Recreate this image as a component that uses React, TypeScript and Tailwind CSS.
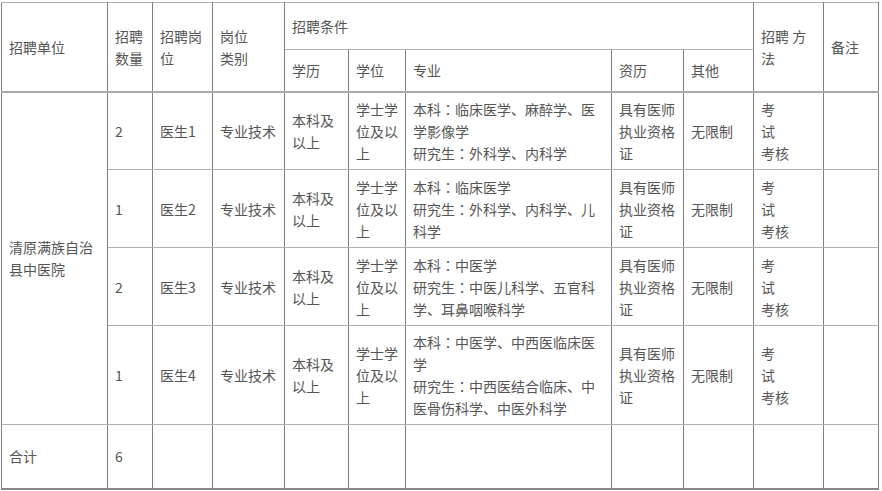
import React from "react";

const cell =
  "border border-y-[#b0b0b0] border-x-[#808080] px-[7px] py-[5px] align-middle text-left";

function Colonize({ text }: { text: string }) {
  const parts = text.split("：");
  if (parts.length === 1) return <>{text}</>;
  return (
    <>
      {parts[0]}
      <span style={{ fontFamily: '"Noto Sans CJK TC", sans-serif' }}>：</span>
      {parts.slice(1).join("：")}
    </>
  );
}

function Lines({ lines }: { lines: string[] }) {
  return (
    <>
      {lines.map((l, i) => (
        <div key={i} className="whitespace-nowrap">
          <Colonize text={l} />
        </div>
      ))}
    </>
  );
}

const rows = [
  {
    n: "2",
    pos: "医生1",
    major: ["本科：临床医学、麻醉学、医", "学影像学", "研究生：外科学、内科学"],
    h: "h-[78px]",
  },
  {
    n: "1",
    pos: "医生2",
    major: ["本科：临床医学", "研究生：外科学、内科学、儿", "科学"],
    h: "h-[78px]",
  },
  {
    n: "2",
    pos: "医生3",
    major: ["本科：中医学", "研究生：中医儿科学、五官科", "学、耳鼻咽喉科学"],
    h: "h-[78px]",
  },
  {
    n: "1",
    pos: "医生4",
    major: [
      "本科：中医学、中西医临床医",
      "学",
      "研究生：中西医结合临床、中",
      "医骨伤科学、中医外科学",
    ],
    h: "h-[99px]",
  },
];

export default function App() {
  return (
    <div
      className="w-[882px] h-[491px] bg-white text-[14px] leading-[22px] text-[#555]"
      style={{ fontFamily: '"Noto Sans CJK SC", "Microsoft YaHei", sans-serif' }}
    >
      <table className="ml-px mt-[2px] border-collapse table-fixed w-[877px] border-b-2 border-b-[#888]">
        <colgroup>
          <col className="w-[106px]" />
          <col className="w-[45px]" />
          <col className="w-[60px]" />
          <col className="w-[72px]" />
          <col className="w-[64px]" />
          <col className="w-[57px]" />
          <col className="w-[206px]" />
          <col className="w-[72px]" />
          <col className="w-[70px]" />
          <col className="w-[70px]" />
          <col className="w-[55px]" />
        </colgroup>
        <tbody>
          <tr className="h-[47px]">
            <td rowSpan={2} className={cell}>
              招聘单位
            </td>
            <td rowSpan={2} className={cell}>
              <Lines lines={["招聘", "数量"]} />
            </td>
            <td rowSpan={2} className={cell}>
              <Lines lines={["招聘岗", "位"]} />
            </td>
            <td rowSpan={2} className={cell}>
              <Lines lines={["岗位", "类别"]} />
            </td>
            <td colSpan={5} className={cell}>
              招聘条件
            </td>
            <td rowSpan={2} className={cell}>
              <Lines lines={["招聘 方", "法"]} />
            </td>
            <td rowSpan={2} className={cell}>
              备注
            </td>
          </tr>
          <tr className="h-[42px] border-b-2 border-b-[#aaa]">
            <td className={cell}>学历</td>
            <td className={cell}>学位</td>
            <td className={cell}>专业</td>
            <td className={cell}>资历</td>
            <td className={cell}>其他</td>
          </tr>
          {rows.map((r, i) => (
            <tr key={i} className={r.h}>
              {i === 0 && (
                <td rowSpan={4} className={cell}>
                  <Lines lines={["清原满族自治", "县中医院"]} />
                </td>
              )}
              <td className={cell}>{r.n}</td>
              <td className={cell}>{r.pos}</td>
              <td className={cell}>专业技术</td>
              <td className={cell}>
                <Lines lines={["本科及", "以上"]} />
              </td>
              <td className={cell}>
                <Lines lines={["学士学", "位及以", "上"]} />
              </td>
              <td className={cell}>
                <Lines lines={r.major} />
              </td>
              <td className={cell}>
                <Lines lines={["具有医师", "执业资格", "证"]} />
              </td>
              <td className={cell}>无限制</td>
              <td className={cell}>
                <Lines lines={["考", "试", "考核"]} />
              </td>
              <td className={cell}></td>
            </tr>
          ))}
          <tr className="h-[64px]">
            <td className={cell}>合计</td>
            <td className={cell}>6</td>
            <td className={cell}></td>
            <td className={cell}></td>
            <td className={cell}></td>
            <td className={cell}></td>
            <td className={cell}></td>
            <td className={cell}></td>
            <td className={cell}></td>
            <td className={cell}></td>
            <td className={cell}></td>
          </tr>
        </tbody>
      </table>
    </div>
  );
}
